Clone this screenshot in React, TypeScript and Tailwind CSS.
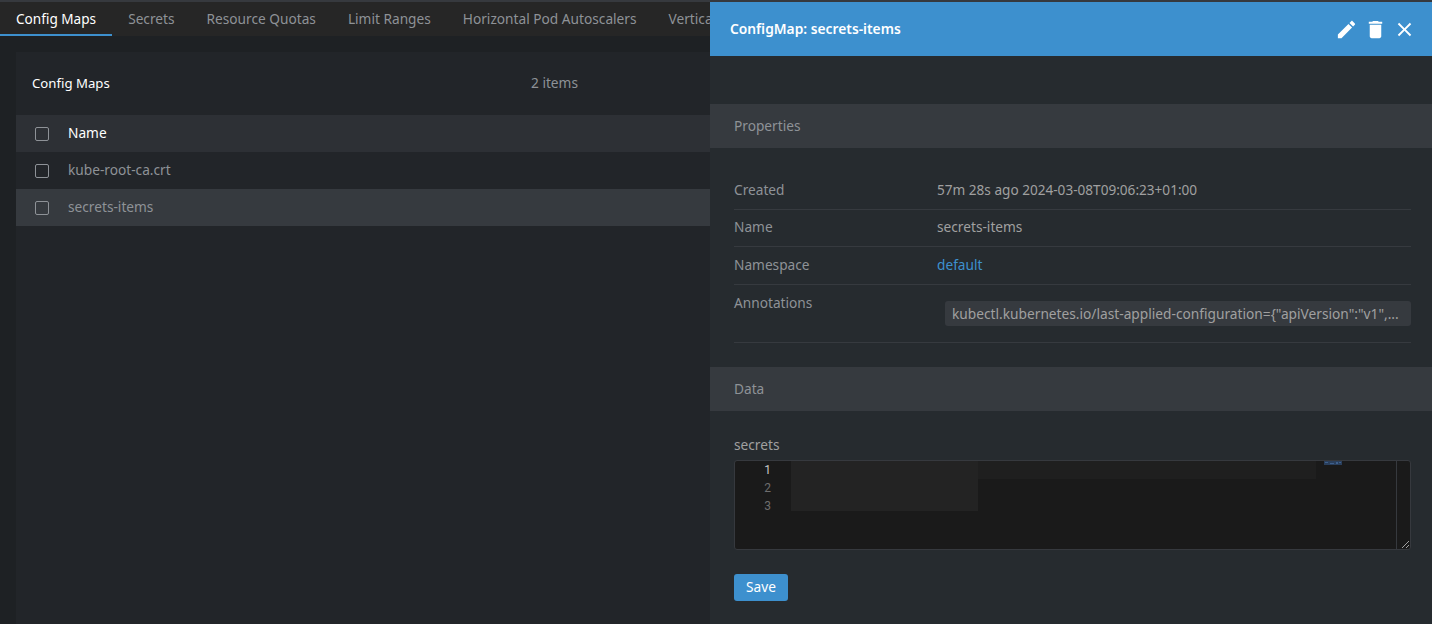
const tabs = ["Config Maps", "Secrets", "Resource Quotas", "Limit Ranges", "Horizontal Pod Autoscalers", "Vertical Pod Autoscalers"];

const Check = () => <span className="block w-[14px] h-[14px] rounded-[2px] border border-[#8e9297] shrink-0" />;

const Row = ({ name, active }: { name: string; active?: boolean }) => (
  <div className={`flex items-center h-[37px] pl-[19px] gap-[19px] text-[#8e9297] ${active ? "bg-[#363a3f]" : ""}`}>
    <Check />
    <span>{name}</span>
  </div>
);

const Prop = ({ label, children }: { label: string; children: React.ReactNode }) => (
  <div className="flex items-center h-[37.5px] border-b border-[#363a3f]">
    <span className="w-[203px] text-[#8e9297]">{label}</span>
    {children}
  </div>
);

const Icon = ({ d }: { d: string }) => (
  <svg width="23" height="23" viewBox="0 0 24 24" fill="white">
    <path d={d} />
  </svg>
);

export default function App() {
  return (
    <div className="relative w-[1432px] h-[624px] overflow-hidden bg-[#1e2124] text-[13.7px] font-['Noto_Sans',sans-serif]">
      <div className="h-[2px] bg-[#36393e]" />
      <div className="flex w-[710px] h-[34px] overflow-hidden bg-[#262626] text-[#8e9297]">
        {tabs.map((t, i) => (
          <div key={t} className={`px-[16px] pt-[7px] whitespace-nowrap ${i === 0 ? "text-white border-b-2 border-[#3d90ce] text-[13.6px]" : ""}`}>
            {t}
          </div>
        ))}
      </div>
      <div className="ml-[16px] mt-[16px] h-[572px] bg-[#222529]">
        <div className="flex items-center h-[63px] pl-[16px] text-white">
          <span className="w-[499px] text-[13.2px]">Config Maps</span>
          <span className="text-[#8e9297]">2 items</span>
        </div>
        <div className="flex items-center h-[37px] pl-[19px] gap-[19px] bg-[#2d3035] text-white">
          <Check />
          <span>Name</span>
        </div>
        <Row name="kube-root-ca.crt" />
        <Row name="secrets-items" active />
      </div>

      <div className="absolute left-[710px] top-[2px] right-0 bottom-0 bg-[#262b2f]">
        <div className="flex items-center h-[54px] pl-[20px] pr-[16px] bg-[#3d90ce] text-white">
          <span className="font-semibold flex-1 text-[13.8px] pt-[1px]">ConfigMap: secrets-items</span>
          <div className="flex items-center gap-[6px] pt-[1px]">
            <Icon d="M20.71,7.04C21.1,6.65 21.1,6 20.71,5.63L18.37,3.29C18,2.9 17.35,2.9 16.96,3.29L15.12,5.12L18.87,8.87M3,17.25V21H6.75L17.81,9.93L14.06,6.18L3,17.25Z" />
            <Icon d="M6 19c0 1.1.9 2 2 2h8c1.1 0 2-.9 2-2V7H6v12zM19 4h-3.5l-1-1h-5l-1 1H5v2h14V4z" />
            <Icon d="M19 6.41L17.59 5 12 10.59 6.41 5 5 6.41 10.59 12 5 17.59 6.41 19 12 13.41 17.59 19 19 17.59 13.41 12 19 6.41z" />
          </div>
        </div>
        <div className="mt-[48px] flex items-center h-[44px] px-[24px] bg-[#363a3f] text-[#8e9297]">Properties</div>
        <div className="px-[24px] pr-[21px] mt-[24px]">
          <Prop label="Created">
            <span className="text-[#a0a0a0] text-[13.6px]">57m 28s ago 2024-03-08T09:06:23+01:00</span>
          </Prop>
          <Prop label="Name">
            <span className="text-[#a0a0a0]">secrets-items</span>
          </Prop>
          <Prop label="Namespace">
            <span className="text-[#3d90ce]">default</span>
          </Prop>
          <div className="flex h-[58px] border-b border-[#363a3f]">
            <span className="w-[211px] pt-[8px] text-[#8e9297]">Annotations</span>
            <span className="mt-[16px] flex-1 h-[25px] leading-[25px] px-[7px] rounded-[3px] bg-[#363a3f] text-[#a0a0a0] text-[13.73px] whitespace-nowrap overflow-hidden">
              kubectl.kubernetes.io/last-applied-configuration={"{"}"apiVersion":"v1",...
            </span>
          </div>
        </div>
        <div className="mt-[24px] flex items-center h-[44px] pt-[1px] px-[24px] bg-[#363a3f] text-[#8e9297]">Data</div>
        <div className="px-[24px] pr-[21px]">
          <div className="mt-[24px] h-[25px] text-[#a0a0a0]">secrets</div>
          <div className="relative flex h-[90px] rounded-[3px] border border-[#36393e] bg-[#1a1a1a] overflow-hidden text-[12px] leading-[18px] font-['Roboto',sans-serif]">
            <div className="w-[56px] pr-[20px] text-right text-[#6e6e6e]">
              <div className="text-[#c6c6c6]">1</div>
              <div>2</div>
              <div>3</div>
            </div>
            <div className="absolute left-[56px] top-0 w-[187px] h-[50px] bg-[#232323]" />
            <div className="absolute left-[243px] top-0 w-[338px] h-[18px] bg-[#1f1f1f]" />
            <svg className="absolute left-[589px] top-0" width="18" height="4" viewBox="0 0 18 4">
              <rect width="18" height="4" fill="#2a3f5c" />
              <path d="M1 1h3v1H1zM6 2h4v1H6zM12 1h2v2h-2zM15 1h2v1h-2z" fill="#3d5f8c" />
            </svg>
            <div className="absolute right-[13px] top-0 bottom-0 w-px bg-[#36393e]" />
            <svg className="absolute right-[1px] bottom-[1px]" width="8" height="8" viewBox="0 0 8 8" stroke="#a0a0a0" strokeWidth="1">
              <path d="M1 8 L8 1 M5 8 L8 5" />
            </svg>
          </div>
          <button className="mt-[24px] block w-[54px] h-[27px] rounded-[3px] bg-[#3d90ce] text-white">Save</button>
        </div>
      </div>
    </div>
  );
}
